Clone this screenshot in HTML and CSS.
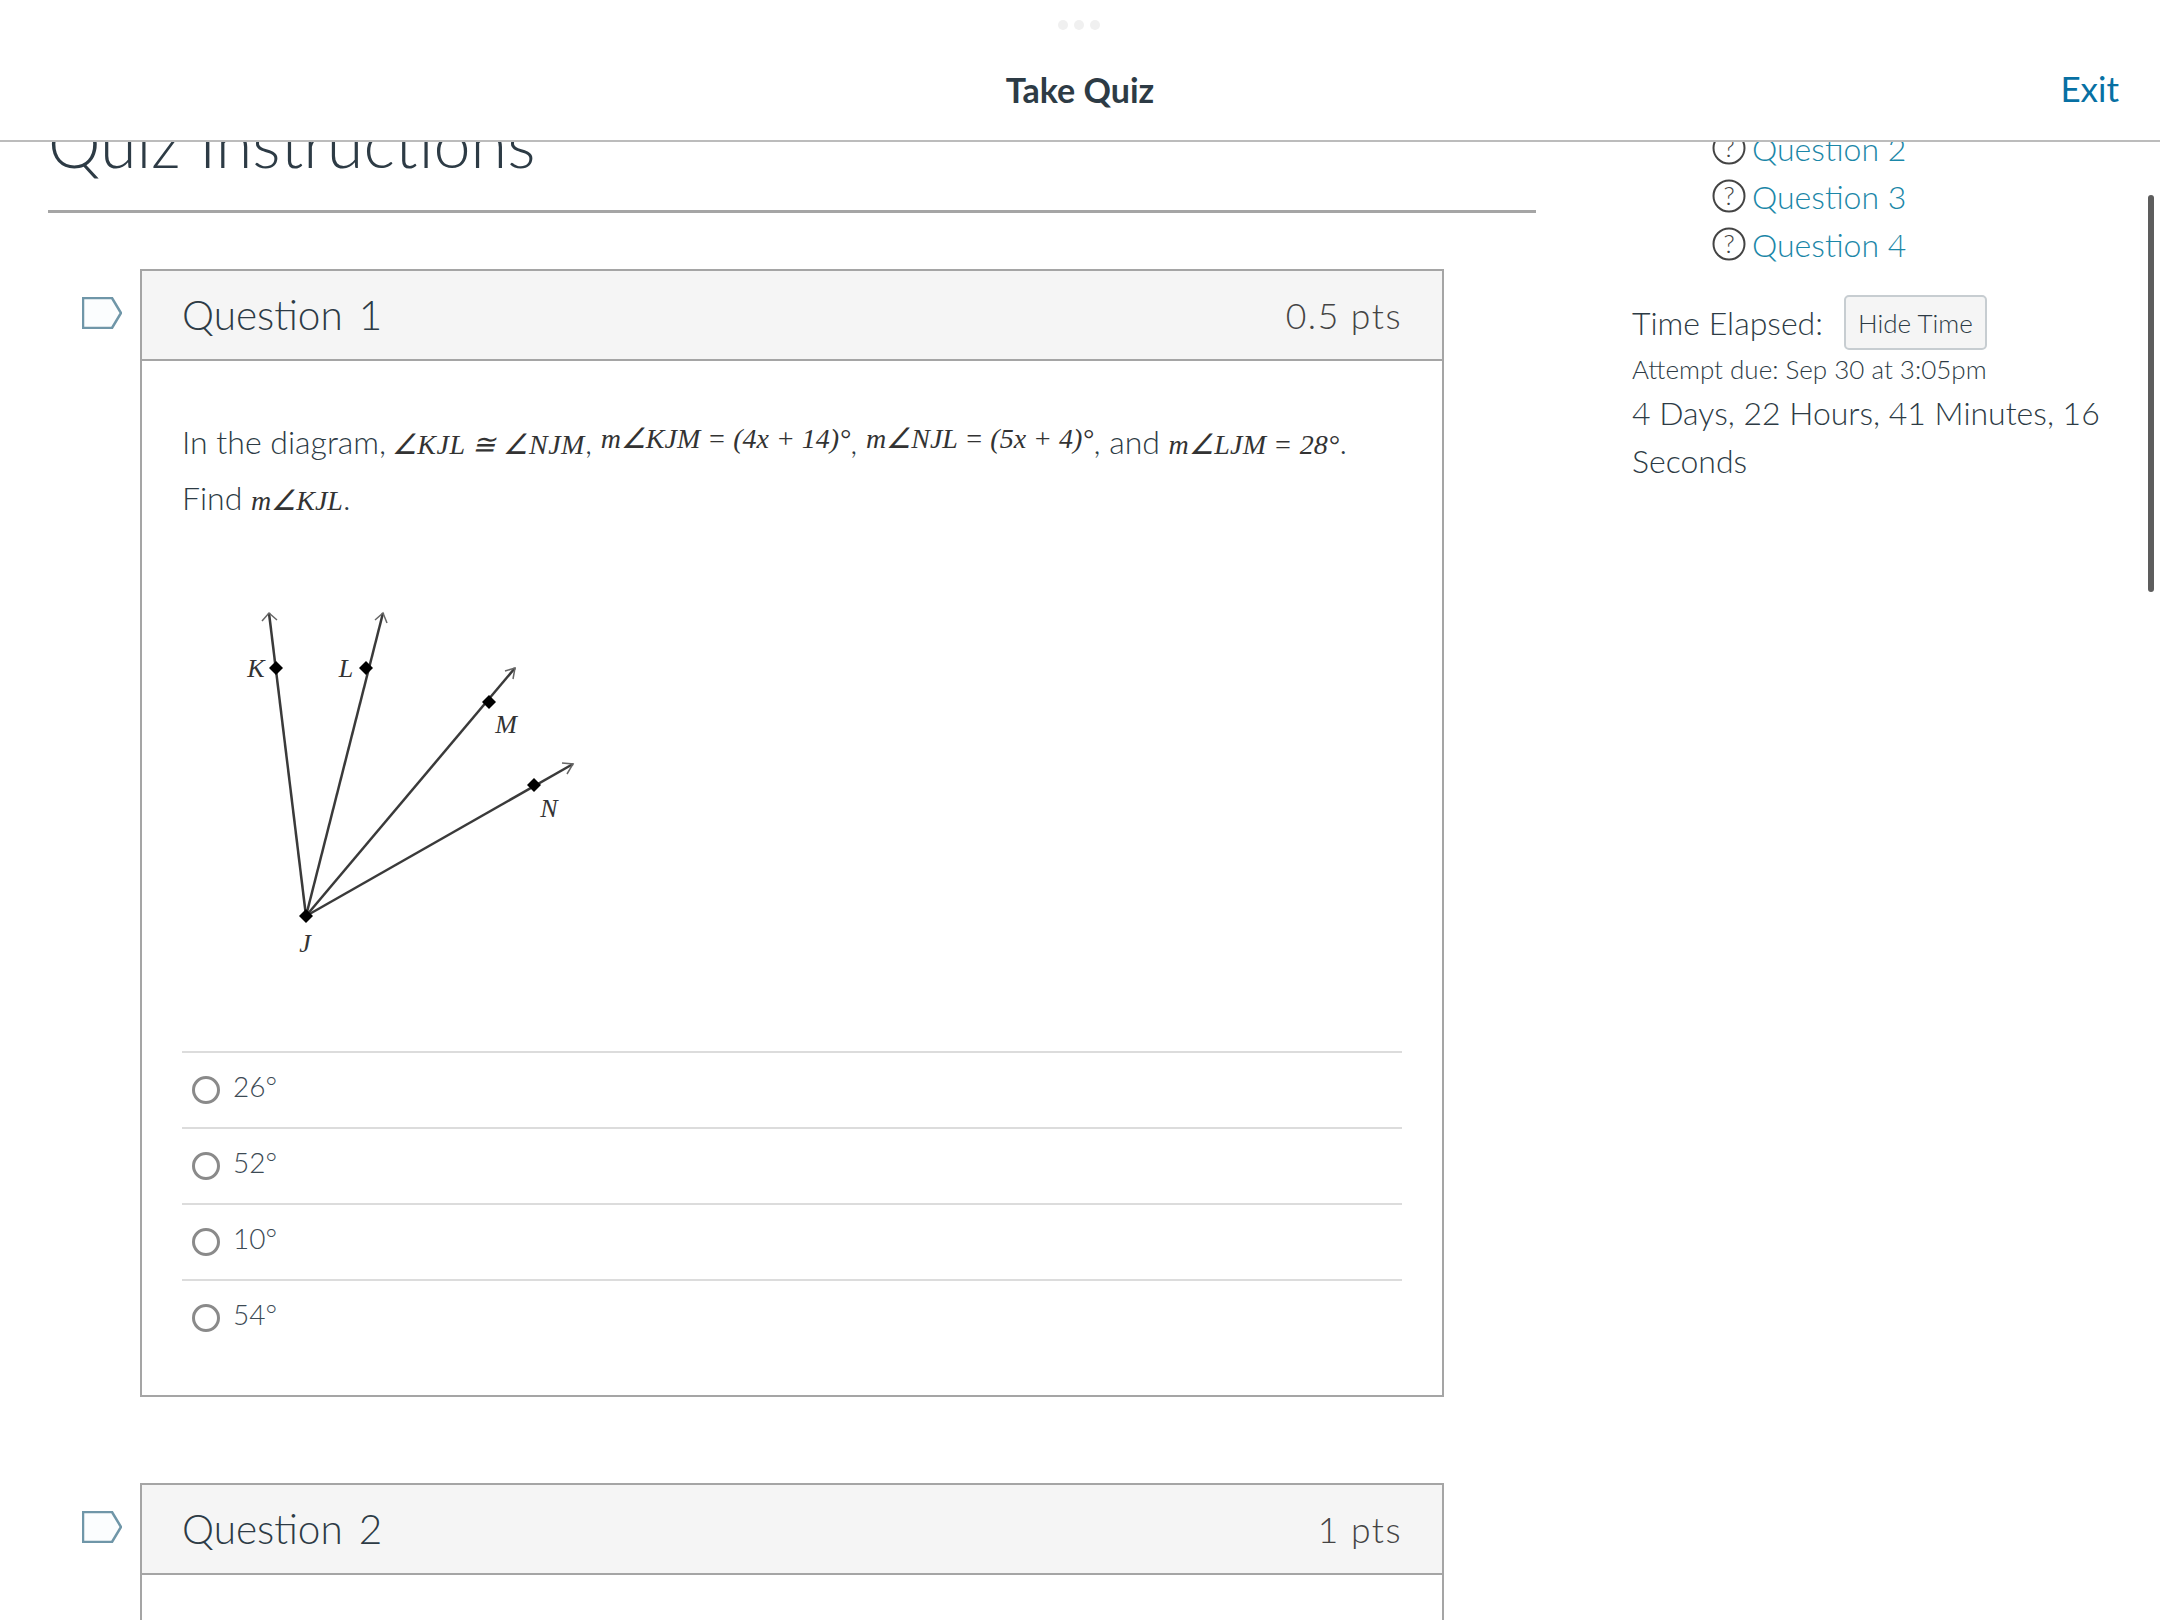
FILE: index.html
```html
<!DOCTYPE html>
<html>
<head>
	<meta charset="utf-8">
	<title>Take Quiz</title>
	<link rel="stylesheet" href="styles.css">
</head>
<body>
	<div class="page">
		<div class="dots"><span></span><span></span><span></span></div>
		<div class="topbar">
			<div class="topbarTitle">Take Quiz</div>
			<a class="exit">Exit</a>
		</div>
		<div class="scroller">
			<div class="main">
				<h1 class="quizTitle">Quiz Instructions</h1>

				<div class="questionRow">
					<svg class="flag" viewBox="0 0 40 32"><path d="M1 1H30L39 16L30 31H1Z"/></svg>
					<div class="question">
						<div class="questionHead">
							<span class="questionName">Question 1</span>
							<span class="points">0.5 pts</span>
						</div>
						<div class="questionBody">
							<p class="prompt">In the diagram, <span class="math m1">∠KJL ≅ ∠NJM</span>, <span class="math raised">m∠KJM = (4x + 14)°</span>, <span class="math raised">m∠NJL = (5x + 4)°</span>, and <span class="math m4">m∠LJM = 28°</span>.<br>Find <span class="math">m∠KJL</span>.</p>
							<svg class="diagram" viewBox="182 590 440 400">
								<g class="rays">
									<path d="M306 915L269 612"/>
									<path d="M306 915L383 612"/>
									<path d="M306 915L515 667"/>
									<path d="M306 915L573 763"/>
								</g>
								<g class="arrows">
									<path d="M262 620L269 612L277 619"/>
									<path d="M375 619L383 612L387 622"/>
									<path d="M505 670L515 667L513 678"/>
									<path d="M562 762L573 763L567 773"/>
								</g>
								<g class="dotsOnRays">
									<path d="M276 660L283 667L276 674L269 667Z"/>
									<path d="M366 660L373 667L366 674L359 667Z"/>
									<path d="M489 694L496 701L489 708L482 701Z"/>
									<path d="M534 777L541 784L534 791L527 784Z"/>
									<path d="M306 908L313 915L306 922L299 915Z"/>
								</g>
								<text x="256" y="676">K</text>
								<text x="346" y="676">L</text>
								<text x="506" y="732">M</text>
								<text x="549" y="816">N</text>
								<text x="305" y="951">J</text>
							</svg>
							<div class="answers">
								<div class="answer"><span class="radio"></span><span class="answerText">26°</span></div>
								<div class="answer"><span class="radio"></span><span class="answerText">52°</span></div>
								<div class="answer"><span class="radio"></span><span class="answerText">10°</span></div>
								<div class="answer"><span class="radio"></span><span class="answerText">54°</span></div>
							</div>
						</div>
					</div>
				</div>

				<div class="questionRow">
					<svg class="flag" viewBox="0 0 40 32"><path d="M1 1H30L39 16L30 31H1Z"/></svg>
					<div class="question">
						<div class="questionHead">
							<span class="questionName">Question 2</span>
							<span class="points">1 pts</span>
						</div>
						<div class="questionBody"></div>
					</div>
				</div>
			</div>

			<div class="sidebar">
				<ul class="questionList">
					<li><svg class="help" viewBox="0 0 34 34"><circle cx="17" cy="17" r="15.5"/><text x="17" y="26">?</text></svg><a>Question 2</a></li>
					<li><svg class="help" viewBox="0 0 34 34"><circle cx="17" cy="17" r="15.5"/><text x="17" y="26">?</text></svg><a>Question 3</a></li>
					<li><svg class="help" viewBox="0 0 34 34"><circle cx="17" cy="17" r="15.5"/><text x="17" y="26">?</text></svg><a>Question 4</a></li>
				</ul>
				<div class="timeRow">
					<span class="timeLabel">Time Elapsed:</span>
					<button class="hideTime">Hide Time</button>
				</div>
				<div class="due">Attempt due: Sep 30 at 3:05pm</div>
				<div class="elapsed">4 Days, 22 Hours, 41 Minutes, 16 Seconds</div>
			</div>
		</div>
		<div class="scrollThumb"></div>
	</div>
</body>
</html>
```

FILE: styles.css
```css
body {
	margin: 0;
	background: #fff;
	color: #2d3b45;
	font-family: "Lato", "Open Sans", sans-serif;
	font-weight: 300;
}

.page {
	position: relative;
	width: 2160px;
	height: 1620px;
	display: flex;
	flex-direction: column;
	overflow: hidden;
}

/* top bar */
.dots {
	position: absolute;
	top: 20px;
	left: 1058px;
	z-index: 2;
	display: flex;
	gap: 6px;
}
.dots span {
	width: 10px;
	height: 10px;
	border-radius: 50%;
	background: #f0f0f0;
}
.topbar {
	flex: none;
	height: 142px;
	border-bottom: 2px solid #bcbcbc;
	display: flex;
	align-items: center;
	justify-content: center;
	position: relative;
	z-index: 1;
	background: #fff;
	padding-top: 38px;
	box-sizing: border-box;
}
.topbarTitle {
	font-size: 34px;
	font-weight: 700;
}
.exit {
	position: absolute;
	right: 41px;
	top: 67px;
	font-size: 35px;
	font-weight: 400;
	color: #0770a3;
}

/* scrolled content */
.scroller {
	flex: 1;
	display: flex;
	min-height: 0;
	overflow: hidden;
}
.main {
	flex: none;
	width: 1488px;
	margin-left: 48px;
}
.quizTitle {
	margin: -44px 0 56px;
	height: 115px;
	box-sizing: border-box;
	border-bottom: 3px solid #a5a5a5;
	font-size: 66.5px;
	line-height: 88px;
	font-weight: 300;
}

.questionRow {
	display: flex;
	margin-bottom: 86px;
}
.flag {
	flex: none;
	width: 40px;
	height: 32px;
	margin: 28px 18px 0 34px;
	fill: #fbfdfe;
	stroke: #6f96a8;
	stroke-width: 2.5;
}
.question {
	flex: none;
	width: 1304px;
	box-sizing: border-box;
	border: 2px solid #a5a5a5;
}
.questionHead {
	height: 90px;
	box-sizing: border-box;
	background: #f5f5f5;
	border-bottom: 2px solid #a5a5a5;
	padding: 0 40px;
	display: flex;
	align-items: center;
	justify-content: space-between;
}
.questionName {
	font-size: 40.5px;
	font-weight: 300;
	word-spacing: 5px;
	padding-bottom: 2px;
}
.points {
	font-size: 35.5px;
	letter-spacing: 1.5px;
	font-weight: 300;
	color: #444;
}
.questionBody {
	padding: 53px 40px 40px;
}
.prompt {
	margin: 0;
	font-size: 32px;
	line-height: 56px;
	white-space: nowrap;
}
.math {
	font-family: "Liberation Serif", serif;
	font-style: italic;
	font-size: 28px;
	line-height: 1;
	font-weight: 400;
	color: #333;
}
.raised {
	position: relative;
	top: -6px;
}
.m1 {
	margin-left: -3px;
	letter-spacing: 0.5px;
}
.m4 {
	letter-spacing: 0.2px;
}

.diagram {
	display: block;
	width: 440px;
	height: 400px;
	margin: 65px 0 60px;
}
.rays path {
	fill: none;
	stroke: #3a3a3a;
	stroke-width: 2.5;
}
.arrows path {
	fill: none;
	stroke: #666;
	stroke-width: 1.5;
}
.dotsOnRays path {
	fill: #000;
}
.diagram text {
	font-family: "Liberation Serif", serif;
	font-style: italic;
	font-size: 26px;
	font-weight: 400;
	text-anchor: middle;
	fill: #333;
}

.answer {
	height: 76px;
	box-sizing: border-box;
	border-top: 2px solid #dcdcdc;
	display: flex;
	align-items: center;
	padding-left: 10px;
}
.radio {
	width: 28px;
	height: 28px;
	box-sizing: border-box;
	border: 3px solid #8a8a8a;
	border-radius: 50%;
	margin-right: 13px;
}
.answerText {
	font-size: 28px;
	padding-bottom: 8px;
	color: #3c4a54;
}

/* right side */
.sidebar {
	flex: none;
	width: 480px;
	margin-left: 96px;
	margin-top: -18px;
}
.questionList {
	list-style: none;
	margin: 0 0 27px;
	padding: 0 0 0 80px;
}
.questionList li {
	display: flex;
	align-items: center;
	height: 48px;
	font-size: 32px;
	color: #1b87a8;
}
.help {
	width: 34px;
	height: 34px;
	margin-right: 6px;
}
.help circle {
	fill: none;
	stroke: #444;
	stroke-width: 2;
}
.help text {
	font-size: 26px;
	text-anchor: middle;
	fill: #444;
}
.timeRow {
	display: flex;
	align-items: center;
	gap: 21px;
	font-size: 32px;
}
.hideTime {
	width: 143px;
	height: 55px;
	padding: 0;
	border: 2px solid #c7cdd1;
	border-radius: 5px;
	background: #f5f5f5;
	color: #2d3b45;
	font-family: inherit;
	font-weight: 300;
	font-size: 26px;
}
.due {
	font-size: 26px;
	line-height: 39px;
	color: #2d3b45;
}
.elapsed {
	font-size: 32px;
	line-height: 48px;
}

.scrollThumb {
	position: absolute;
	left: 2148px;
	top: 195px;
	width: 6px;
	height: 397px;
	border-radius: 3px;
	background: #5d5d5d;
}
```
